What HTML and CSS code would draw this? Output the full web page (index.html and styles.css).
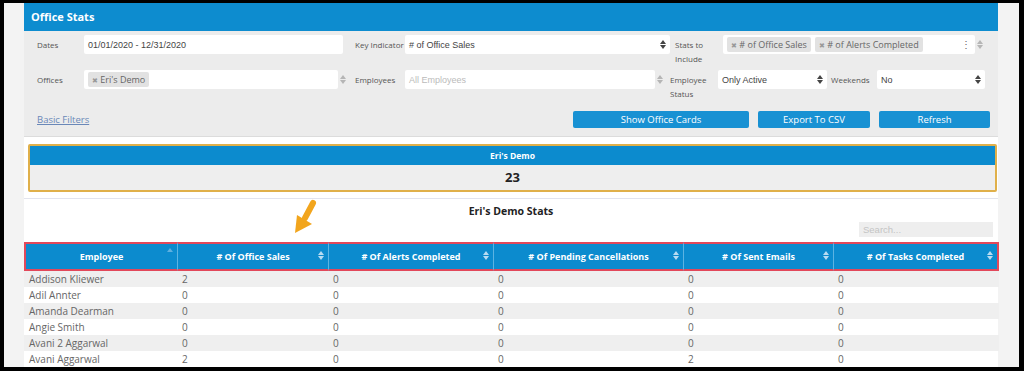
FILE: index.html
```html
<!DOCTYPE html>
<html lang="en">
<head>
  <meta charset="UTF-8">
  <title>Office Stats</title>
  <link rel="stylesheet" href="styles.css">
</head>
<body>
  <div class="frame">
    <div class="panel">
      <div class="panel-head">Office Stats</div>

      <div class="filters">
        <div class="frow">
          <label class="lbl w-dates">Dates</label>
          <div class="box dates">01/01/2020 - 12/31/2020</div>
          <label class="lbl w-key">Key Indicator</label>
          <div class="box keyind">
            <span># of Office Sales</span>
            <span class="updown"></span>
          </div>
          <label class="lbl w-stats">Stats to<br>Include</label>
          <div class="box stats">
            <span class="tag"><i>&#10006;</i> # of Office Sales</span>
            <span class="tag"><i>&#10006;</i> # of Alerts Completed</span>
            <span class="more">&#8942;</span>
          </div>
          <span class="spin"></span>
        </div>

        <div class="frow row2">
          <label class="lbl w-dates">Offices</label>
          <div class="box offices">
            <span class="tag"><i>&#10006;</i> Eri's Demo</span>
          </div>
          <span class="spin"></span>
          <label class="lbl w-emp">Employees</label>
          <div class="box employees placeholder">All Employees</div>
          <span class="spin"></span>
          <label class="lbl w-stats">Employee<br>Status</label>
          <div class="box status">
            <span>Only Active</span>
            <span class="updown"></span>
          </div>
          <label class="lbl w-week">Weekends</label>
          <div class="box weekends">
            <span>No</span>
            <span class="updown"></span>
          </div>
        </div>

        <div class="frow row3">
          <a class="basic" href="#">Basic Filters</a>
          <div class="actions">
            <button class="btn b-cards">Show Office Cards</button>
            <button class="btn b-csv">Export To CSV</button>
            <button class="btn b-refresh">Refresh</button>
          </div>
        </div>
      </div>

      <div class="cards">
        <div class="office-card">
          <div class="oc-head">Eri's Demo</div>
          <div class="oc-value">23</div>
        </div>
      </div>

      <div class="stats-area">
        <svg class="pointer" width="26" height="36" viewBox="0 0 26 36">
          <line x1="21" y1="4" x2="13" y2="19" stroke="#f2a51d" stroke-width="6" stroke-linecap="round"/>
          <polygon points="3,34 5,16 20,25" fill="#f2a51d"/>
        </svg>
        <h3>Eri's Demo Stats</h3>
        <div class="search-row">
          <input class="search" type="text" placeholder="Search...">
        </div>

        <table class="grid">
          <thead>
            <tr>
              <th class="c1">Employee<span class="sort asc"></span></th>
              <th class="c2"># Of Office Sales<span class="sort"></span></th>
              <th class="c3"># Of Alerts Completed<span class="sort"></span></th>
              <th class="c4"># Of Pending Cancellations<span class="sort"></span></th>
              <th class="c5"># Of Sent Emails<span class="sort"></span></th>
              <th class="c6"># Of Tasks Completed<span class="sort"></span></th>
            </tr>
          </thead>
          <tbody>
            <tr><td>Addison Kliewer</td><td>2</td><td>0</td><td>0</td><td>0</td><td>0</td></tr>
            <tr><td>Adil Annter</td><td>0</td><td>0</td><td>0</td><td>0</td><td>0</td></tr>
            <tr><td>Amanda Dearman</td><td>0</td><td>0</td><td>0</td><td>0</td><td>0</td></tr>
            <tr><td>Angie Smith</td><td>0</td><td>0</td><td>0</td><td>0</td><td>0</td></tr>
            <tr><td>Avani 2 Aggarwal</td><td>0</td><td>0</td><td>0</td><td>0</td><td>0</td></tr>
            <tr><td>Avani Aggarwal</td><td>2</td><td>0</td><td>0</td><td>2</td><td>0</td></tr>
          </tbody>
        </table>
      </div>
    </div>
  </div>
</body>
</html>
```

FILE: styles.css
```css
* { margin: 0; padding: 0; box-sizing: border-box; }
html, body { height: 100%; overflow: hidden; }
body { background: #000; font-family: "Open Sans", "Liberation Sans", sans-serif; color: #555; }

.frame { margin: 3px 5px 0 4px; height: 364px; background: #f3f3f3; padding: 0 21px 0 20px; overflow: hidden; }
.panel { background: #fff; height: 100%; }

.panel-head { background: #0d8ccf; color: #fff; font-weight: 700; font-size: 11px; height: 28px; line-height: 27px; padding-left: 7px; }

.filters { background: #ececec; padding: 4px 0 0 13px; height: 106px; border-bottom: 1px solid #dcdcdc; }
.frow { display: flex; align-items: flex-start; }
.row2 { margin-top: 4px; }
.row3 { margin-top: 10px; align-items: center; }

.lbl { font-size: 8px; color: #555; line-height: 14px; padding-top: 3px; }
.w-dates { width: 47px; }
.w-key { width: 50px; margin-left: 12px; }
.w-emp { width: 50px; margin-left: 7px; }
.w-stats { width: 48px; margin-left: 5px; }
.w-week { width: 46px; margin-left: 4px; }

.box { background: #fff; height: 19px; border-radius: 2px; font-family: "Liberation Sans", Arial, sans-serif; font-size: 9px; color: #444; display: flex; align-items: center; padding: 0 4px; }
.dates { width: 259px; }
.keyind { width: 265px; justify-content: space-between; }
.stats { width: 252px; }
.offices { width: 254px; }
.employees { width: 250px; }
.placeholder { color: #bbb; }
.status { width: 109px; justify-content: space-between; }
.weekends { width: 108px; justify-content: space-between; }

.tag { background: #e2e2e2; color: #666; font-family: "Open Sans", sans-serif; font-size: 9px; padding: 1px 4px; border-radius: 2px; margin-right: 4px; }
.tag i { font-style: normal; color: #999; font-size: 7px; }
.more { margin-left: auto; color: #666; font-size: 10px; }

/* up/down arrow pair drawn with border triangles */
.updown, .spin, .sort { display: inline-flex; flex-direction: column; align-items: center; gap: 1px; }
.updown::before, .spin::before, .sort::before { content: ""; border: 3px solid transparent; border-top: 0; border-bottom: 4px solid currentColor; }
.updown::after, .spin::after, .sort::after { content: ""; border: 3px solid transparent; border-bottom: 0; border-top: 4px solid currentColor; }
.updown { color: #444; }
.spin { color: #b5b5b5; width: 10px; padding-top: 5px; }

.basic { font-size: 9.5px; color: #6a88b8; text-decoration: underline; width: 536px; }
.actions { display: flex; gap: 9px; }
.btn { background: #1891d3; color: #fff; border: none; border-radius: 2px; height: 17px; font-family: "Open Sans", sans-serif; font-size: 9.5px; }
.b-cards { width: 176px; }
.b-csv { width: 112px; }
.b-refresh { width: 111px; }

.cards { padding: 7px 1px 6px 4px; border-bottom: 1px solid #e2e4ee; background: #fff; }
.office-card { border: 2px solid #e0b04a; border-radius: 2px; }
.oc-head { background: #0c8bce; color: #fff; font-weight: 700; font-size: 8.5px; text-align: center; height: 19px; line-height: 19px; }
.oc-value { background: #eeeeee; font-weight: 700; font-size: 13px; color: #222; text-align: center; height: 25px; line-height: 25px; }

.stats-area { position: relative; padding-top: 4px; }
.pointer { position: absolute; left: 268px; top: 0; }
.stats-area h3 { text-align: center; font-size: 10.5px; font-weight: 700; color: #222; line-height: 16px; }
.search-row { display: flex; justify-content: flex-end; padding: 3px 5px 5px 0; }
.search { width: 134px; height: 15px; border: none; background: #eeeeee; font-size: 9.5px; padding-left: 4px; font-family: "Liberation Sans", sans-serif; outline: none; }
.search::placeholder { color: #c4c4c4; }

.grid { width: 975px; border-collapse: separate; border-spacing: 0; font-size: 10px; }
.grid th { background: #0c8bce; color: #fff; font-weight: 700; font-size: 9px; height: 29px; position: relative; border-left: 1px solid #5cb3e2; border-top: 2px solid #e2485a; border-bottom: 2px solid #e2485a; }
.grid th:first-child { border-left: 2px solid #e2485a; }
.grid th:last-child { border-right: 2px solid #e2485a; }
.c1 { width: 153px; }
.c2 { width: 151px; }
.c3 { width: 165px; }
.c4 { width: 190px; }
.c5 { width: 150px; }
.c6 { width: 166px; }
.sort { position: absolute; right: 4px; top: 7px; color: #b8dcf2; }
.sort.asc { top: 4px; color: #5fb0e0; }
.sort.asc::after { display: none; }
.grid td { height: 16px; padding: 0 5px; color: #666; line-height: 16px; }
.grid tbody tr:nth-child(odd) { background: #efefef; }
```
